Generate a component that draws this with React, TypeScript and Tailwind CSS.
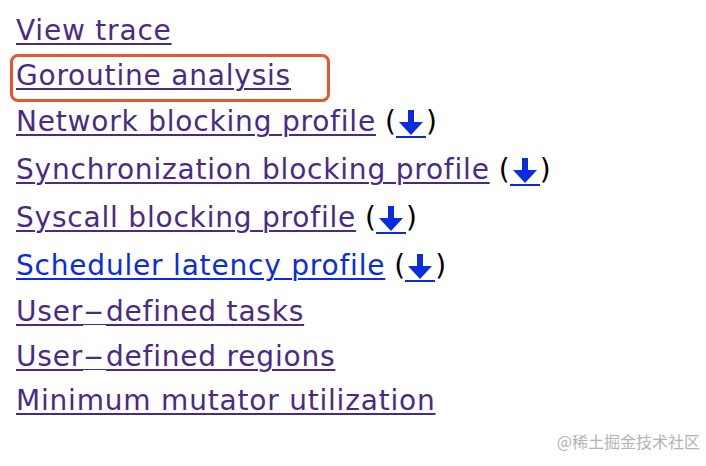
import React from "react";

type Item = { label: string; download?: boolean; visited?: boolean; boxed?: boolean };

const items: Item[] = [
  { label: "View trace", visited: true },
  { label: "Goroutine analysis", visited: true, boxed: true },
  { label: "Network blocking profile", visited: true, download: true },
  { label: "Synchronization blocking profile", visited: true, download: true },
  { label: "Syscall blocking profile", visited: true, download: true },
  { label: "Scheduler latency profile", visited: false, download: true },
  { label: "User-defined tasks", visited: true },
  { label: "User-defined regions", visited: true },
  { label: "Minimum mutator utilization", visited: true },
];

function DownArrow() {
  return (
    <svg width="28" height="27" viewBox="0 0 28 27" className="inline-block">
      <rect x="11" y="1" width="6" height="14" fill="#0a2be0" />
      <polygon points="2,13 26,13 14,26" fill="#0a2be0" />
    </svg>
  );
}

// the hyphen is drawn wide in the original font
function Label({ text }: { text: string }) {
  const parts = text.split("-");
  if (parts.length === 1) return <>{text}</>;
  return (
    <>
      {parts[0]}
      <span className="inline-block scale-x-[2.1] mx-[6px] underline decoration-[1px] underline-offset-[3px]">-</span>
      {parts.slice(1).join("-")}
    </>
  );
}

export default function App() {
  return (
    <div
      className="relative w-[706px] h-[466px] bg-white overflow-hidden"
      style={{ fontFamily: '"DejaVu Sans", "Liberation Sans", sans-serif' }}
    >
      <ul className="pl-4 pt-[9px] flex flex-col text-[28px] tracking-[0.8px]">
        {items.map((it) => (
          <li
            key={it.label}
            className={`relative flex items-center ${it.download ? "h-[48px]" : "h-[44.5px]"}`}
          >
            {it.boxed && (
              <span className="absolute left-[-6px] top-[0px] w-[320px] h-[48px] rounded-[8px] border-[3px] border-[#e8572a]" />
            )}
            <a
              href="#"
              className={`underline decoration-[2px] underline-offset-[3px] ${
                it.visited ? "text-[#4a2a86]" : "text-[#0a2be0]"
              }`}
            >
              <Label text={it.label} />
            </a>
            {it.download && (
              <span className="ml-[9px] text-black flex items-center tracking-normal">
                (
                <a href="#" className="flex items-end border-b-[2px] border-[#0a2be0] px-[1px] h-[29px] mt-[2px]">
                  <DownArrow />
                </a>
                )
              </span>
            )}
          </li>
        ))}
      </ul>
      <div
        className="absolute right-[6px] bottom-[13px] text-[16px] text-[#b4b4b4] tracking-normal"
        style={{ fontFamily: '"Noto Sans CJK SC", sans-serif' }}
      >
        @稀土掘金技术社区
      </div>
    </div>
  );
}
